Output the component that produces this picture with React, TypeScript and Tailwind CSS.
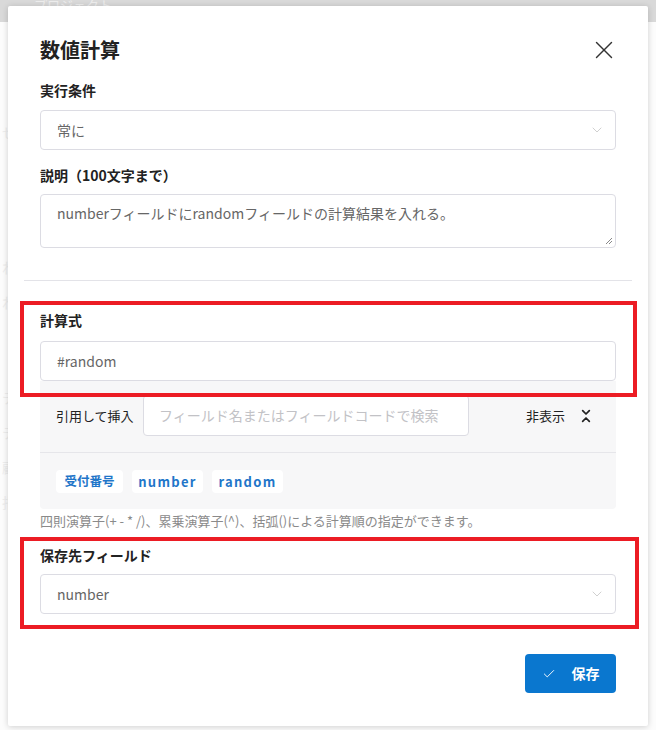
import { Check, ChevronDown, ChevronsDownUp, X } from 'lucide-react';

const font = { fontFamily: '"Noto Sans CJK JP", "Noto Sans", sans-serif' };

const Label = ({ children, className = '' }: { children: React.ReactNode; className?: string }) => (
  <div className={`text-[14px] font-bold leading-[20px] text-[#222] ${className}`}>{children}</div>
);

const SelectBox = ({ value, className = '' }: { value: string; className?: string }) => (
  <div
    className={`flex h-[40px] items-center justify-between rounded-[4px] border border-[#dcdce3] bg-white pl-[16px] pr-[10px] ${className}`}
  >
    <span className="text-[14px] text-[#666]">{value}</span>
    <ChevronDown size={16} strokeWidth={1.2} className="text-[#c4c4c4]" />
  </div>
);

const chips = [
  { label: '受付番号', latin: false },
  { label: 'number', latin: true },
  { label: 'random', latin: true },
];

export default function App() {
  return (
    <div className="relative h-[730px] overflow-hidden bg-[#fcfcfc]" style={font}>
      {/* page behind the overlay */}
      <div className="h-[22px] overflow-hidden bg-[#d9d9d9] pl-[34px] pt-[1px] text-[13px] leading-[8px] text-[#ededed]">
        プロジェクト
      </div>
      <div className="flex flex-col gap-[14px] pl-[2px] pt-[100px] text-[14px] text-[#eeeeee]">
        <span>せ</span>
        <span className="pt-[100px]">れ</span>
        <span>れ</span>
        <span className="pt-[60px]">テ</span>
        <span>テ</span>
        <span>顧</span>
        <span>指</span>
      </div>

      {/* modal */}
      <div className="absolute left-[8px] top-[6px] w-[640px] rounded-[2px] bg-white px-[32px] pb-[33px] pt-[30px] shadow-[0_1px_6px_rgba(0,0,0,0.18)]">
        <div className="flex h-[28px] items-center justify-between">
          <h1 className="text-[20px] font-bold leading-[28px] text-[#222]">数値計算</h1>
          <X size={30} strokeWidth={1.1} className="mr-[-3px] text-[#333]" />
        </div>

        <Label className="mt-[16px]">実行条件</Label>
        <SelectBox value="常に" className="mt-[10px]" />

        <Label className="mt-[15px]">説明（100文字まで）</Label>
        <div className="relative mt-[9px] h-[54px] rounded-[4px] border border-[#dcdce3] bg-white px-[16px] pt-[8px]">
          <p className="text-[14px] leading-[20px] text-[#666]">
            numberフィールドにrandomフィールドの計算結果を入れる。
          </p>
          <svg className="absolute bottom-[2px] right-[2px]" width="8" height="8" viewBox="0 0 8 8">
            <path d="M7 1L1 7M7 4L4 7" stroke="#888" strokeWidth="1" />
          </svg>
        </div>

        <div className="-mx-[16px] mt-[32px] h-px bg-[#e3e3e8]" />

        <Label className="mt-[29px]">計算式</Label>
        <div className="mt-[11px] flex h-[40px] items-center rounded-[4px] border border-[#dcdce3] bg-white pl-[16px] text-[14px] text-[#666]">
          #random
        </div>

        <div className="rounded-b-[4px] bg-[#f7f7f8]">
          <div className="flex items-center border-b border-[#e6e6ea] pb-[16px] pl-[16px] pr-[22px] pt-[14px]">
            <span className="w-[87px] text-[13px] text-[#222]">引用して挿入</span>
            <div className="flex h-[41px] w-[326px] items-center rounded-[4px] border border-[#dcdce3] bg-white pl-[15px] text-[14px] text-[#c2c2c6]">
              フィールド名またはフィールドコードで検索
            </div>
            <span className="ml-auto text-[13px] text-[#222]">非表示</span>
            <ChevronsDownUp size={16} strokeWidth={2.6} className="ml-[13px] text-[#222]" />
          </div>
          <div className="flex gap-[9px] pb-[16px] pl-[16px] pt-[17px]">
            {chips.map((chip) => (
              <span
                key={chip.label}
                className={
                  chip.latin
                    ? 'flex h-[23px] w-[71px] items-center justify-center rounded-[4px] bg-white text-[13px] font-bold tracking-[0.1em] text-[#1f76c9]'
                    : 'flex h-[23px] w-[67px] items-center justify-center rounded-[4px] bg-white text-[12.5px] font-bold text-[#1f76c9]'
                }
              >
                {chip.label}
              </span>
            ))}
          </div>
        </div>

        <p className="mt-[4px] text-[13px] leading-[16px] text-[#8a8a8a]">
          四則演算子(+ - * /)、累乗演算子(^)、括弧()による計算順の指定ができます。
        </p>

        <Label className="mt-[16px]">保存先フィールド</Label>
        <SelectBox value="number" className="mt-[9px]" />

        <div className="mt-[40px] flex justify-end">
          <button className="flex h-[39px] w-[91px] items-center justify-center gap-[16px] rounded-[4px] bg-[#0a77cf] text-[14px] font-bold text-white">
            <Check size={14} strokeWidth={1.6} />
            保存
          </button>
        </div>
      </div>

      {/* annotation boxes */}
      <div className="absolute left-[20px] top-[301px] h-[96px] w-[617px] border-4 border-[#ec1c24]" />
      <div className="absolute left-[20px] top-[537px] h-[92px] w-[619px] border-4 border-[#ec1c24]" />
    </div>
  );
}
